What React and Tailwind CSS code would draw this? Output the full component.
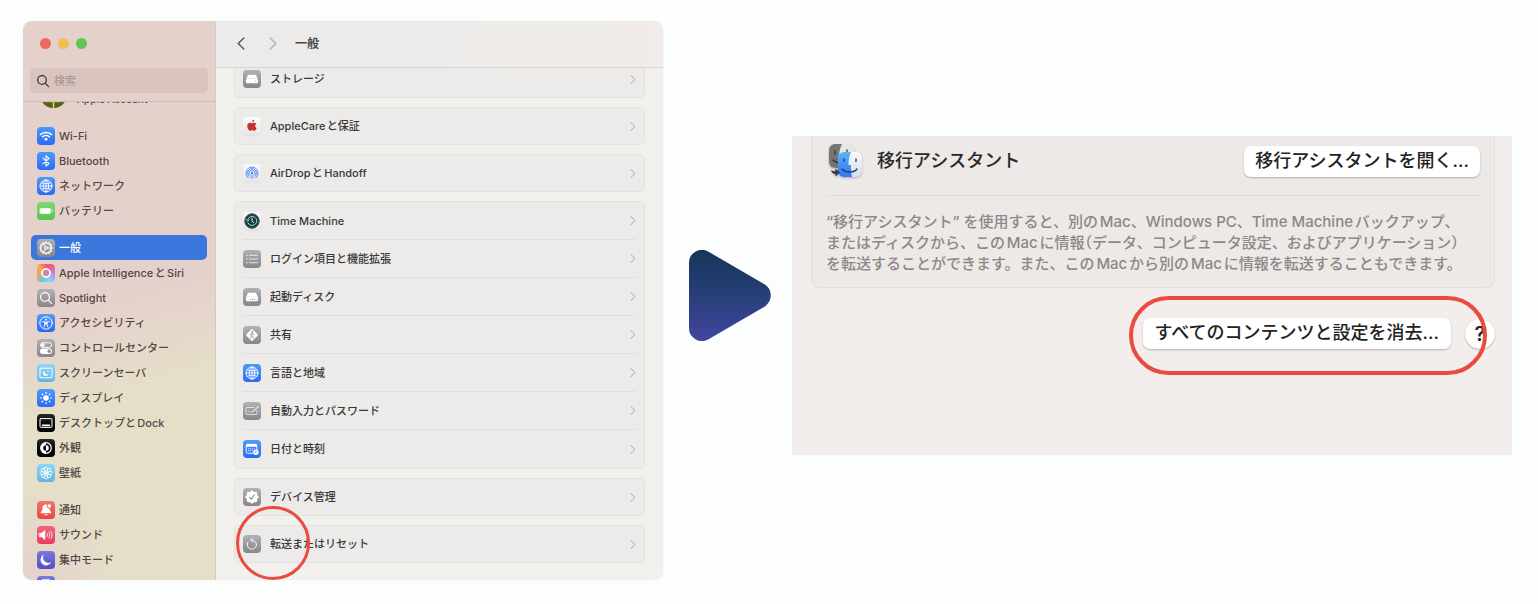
/** Réglages système macOS : « 一般 » puis effacement du contenu, présenté en deux étapes. */

const TILES = {
  blue: 'bg-linear-to-b from-[#4f98f9] to-[#2b6bf3] text-white',
  green: 'bg-linear-to-b from-[#7ddb74] to-[#55c34c] text-white',
  gray: 'bg-linear-to-b from-[#b2b2b5] to-[#86868b] text-white',
  sky: 'bg-linear-to-b from-[#8fd6f5] to-[#63b4e6] text-white',
  black: 'bg-linear-to-b from-[#2a2a2a] to-[#000000] text-white',
  red: 'bg-linear-to-b from-[#f0766c] to-[#e8483b] text-white',
  pink: 'bg-linear-to-b from-[#f2657f] to-[#e83c5c] text-white',
  indigo: 'bg-linear-to-b from-[#7d78de] to-[#524dc6] text-white',
  white: 'bg-linear-to-b from-[#fbfbfb] to-[#e6e6e6] text-[#3b82f6] shadow-xs',
  siri: 'bg-[conic-gradient(from_0deg,#ee5a6c,#ec5f9d,#b690f0,#8fd0f3,#63c8e8,#f0a45a,#f0b04c,#ee5a6c)] text-white',
};

const line = { fill: 'none', stroke: 'currentColor', strokeLinecap: 'round', strokeLinejoin: 'round' };

const SPOKES = [0, 45, 90, 135, 180, 225, 270, 315];
const TEETH = [0, 30, 60, 90, 120, 150, 180, 210, 240, 270, 300, 330];

const GLYPHS = {
  wifi: (
    <g {...line} strokeWidth="1.5" strokeLinecap="butt">
      <path d="M3 7.9a8.6 8.6 0 0 1 12 0" />
      <path d="M5.1 10.2a5.6 5.6 0 0 1 7.8 0" />
      <path d="M7.1 11.9a2.8 2.8 0 0 1 3.8 0L9 13.9z" fill="currentColor" stroke="none" />
    </g>
  ),
  bluetooth: <path {...line} strokeWidth="1.1" d="M6 6.2l6 5.4L9 14.2V3.8l3 2.6-6 5.4" />,
  globe: (
    <g {...line} strokeWidth="0.9">
      <circle cx="9" cy="9" r="6" />
      <ellipse cx="9" cy="9" rx="2.8" ry="6" />
      <path d="M9 3v12M3 9h12M4.2 5.8c2.8 1.4 6.8 1.4 9.6 0M4.2 12.2c2.8-1.4 6.8-1.4 9.6 0" />
    </g>
  ),
  battery: (
    <g fill="currentColor">
      <rect x="2.5" y="6" width="11.8" height="6" rx="1.8" opacity="0.7" />
      <rect x="3.3" y="6.8" width="9.8" height="4.4" rx="1" />
      <path d="M15 7.8c1 .3 1 2.1 0 2.4z" />
    </g>
  ),
  gear: (
    <g {...line} strokeWidth="1">
      <circle cx="9" cy="9" r="5.2" strokeWidth="1.3" />
      <circle cx="9" cy="9" r="1.4" />
      {TEETH.map((a) => (
        <path key={a} d="M9 2.5v1" transform={`rotate(${a} 9 9)`} />
      ))}
      <path d="M10.4 9H14M8.3 7.8l-2-3.2M8.3 10.2l-2 3.2" />
    </g>
  ),
  siri: (
    <g {...line} strokeWidth="0.9">
      {[0, 30, 60].map((a) => (
        <rect key={a} x="5.2" y="5.2" width="7.6" height="7.6" rx="2.6" transform={`rotate(${a} 9 9)`} />
      ))}
      <circle cx="9" cy="9" r="2.9" fill="#c98aa6" stroke="none" />
    </g>
  ),
  search: (
    <g {...line} strokeWidth="1.2">
      <circle cx="8" cy="8" r="4.4" />
      <path d="M11.3 11.3l3.4 3.4" />
    </g>
  ),
  accessibility: (
    <g {...line} strokeWidth="1">
      <circle cx="9" cy="9" r="6.2" />
      <circle cx="9" cy="5.7" r="0.9" fill="currentColor" stroke="none" />
      <path d="M5.8 7.6l2.2.5v2l-1 3M12.2 7.6l-2.2.5v2l1 3M8.5 8.1h1v2h-1z" />
    </g>
  ),
  toggles: (
    <g>
      <rect x="3.4" y="3.8" width="11.2" height="4.6" rx="2.3" {...line} strokeWidth="0.9" />
      <circle cx="5.9" cy="6.1" r="1.8" fill="currentColor" />
      <rect x="3" y="9.5" width="12" height="5.4" rx="2.7" fill="currentColor" />
      <circle cx="12.2" cy="12.2" r="1.7" fill="#8e8e93" />
    </g>
  ),
  screensaver: (
    <g>
      <rect x="3" y="4.2" width="12" height="9.6" rx="0.8" {...line} strokeWidth="1" />
      <path d="M7.8 6.6a2.8 2.8 0 1 0 3.6 3.5 2.6 2.6 0 0 1-3.6-3.5z" fill="currentColor" />
      <circle cx="11" cy="7.3" r="0.7" fill="currentColor" />
      <circle cx="12.6" cy="9" r="0.4" fill="currentColor" />
    </g>
  ),
  sun: (
    <g {...line} strokeWidth="1.2">
      <circle cx="9" cy="9" r="2.8" fill="currentColor" stroke="none" />
      {SPOKES.map((a) => (
        <path key={a} d="M9 3.4v1" transform={`rotate(${a} 9 9)`} />
      ))}
    </g>
  ),
  dock: (
    <g>
      <rect x="3" y="4.6" width="12" height="8.8" rx="1" {...line} strokeWidth="1" />
      <rect x="4.8" y="10.4" width="8.4" height="1.8" rx="0.5" fill="currentColor" />
    </g>
  ),
  contrast: (
    <g>
      <circle cx="9" cy="9" r="5.3" {...line} strokeWidth="1.2" />
      <path d="M9 3.7a5.3 5.3 0 0 0 0 10.6v-2.5a2.8 2.8 0 0 1 0-5.6z" fill="currentColor" />
      <path d="M9 6.2a2.8 2.8 0 0 1 0 5.6z" fill="currentColor" />
    </g>
  ),
  flower: (
    <g {...line} strokeWidth="0.8">
      {SPOKES.map((a) => (
        <ellipse key={a} cx="9" cy="5" rx="1.7" ry="2" transform={`rotate(${a} 9 9)`} />
      ))}
      <circle cx="9" cy="9" r="1.3" fill="currentColor" />
    </g>
  ),
  bell: (
    <g fill="currentColor">
      <path d="M8.8 3.4c-2.3 0-3.3 1.7-3.4 3.6-.1 2.3-.5 3-1.5 4.1-.4.5-.1 1.1.5 1.1h9.2c.6 0 .9-.6.5-1.1-1-1.1-1.4-1.7-1.5-3.5a2.5 2.5 0 0 1-2.4-3.9z" />
      <path d="M7.4 13.2h3.2c-.3 1.6-2.9 1.6-3.2 0z" />
      <circle cx="12.3" cy="5" r="1.8" />
    </g>
  ),
  speaker: (
    <g {...line} strokeWidth="0.8">
      <path d="M2.6 7.3h2l3.2-2.7v8.8l-3.2-2.7h-2z" fill="currentColor" />
      <path d="M10 7.4c.7.9.7 2.3 0 3.2M11.8 6.2c1.3 1.6 1.3 4 0 5.6M13.6 5c1.9 2.4 1.9 5.6 0 8" />
    </g>
  ),
  moon: <path d="M7 3.6A5.6 5.6 0 1 0 14.3 11 5.3 5.3 0 0 1 7 3.6z" fill="currentColor" />,
  hourglass: <path d="M5 3.2h8v1.5c0 2-2.5 3-2.5 4.3s2.5 2.3 2.5 4.3v1.5H5v-1.5c0-2 2.5-3 2.5-4.3S5 6.7 5 4.7z" fill="currentColor" />,
  disk: (
    <g fill="currentColor">
      <path d="M5.6 4.8h6.8c.4 0 .7.2.9.6l1.5 3.4H3.2l1.5-3.4c.2-.4.5-.6.9-.6z" />
      <rect x="2.9" y="9.1" width="12.2" height="4.2" rx="1.3" />
      <path d="M12.3 11.3h1" stroke="#88888d" strokeWidth="1" />
    </g>
  ),
  startupDisk: (
    <g fill="currentColor">
      <path d="M5.6 4.8h6.8c.4 0 .7.2.9.6l1.5 3.4H3.2l1.5-3.4c.2-.4.5-.6.9-.6z" />
      <rect x="2.9" y="8.6" width="12.2" height="4.7" rx="1.3" />
      <path d="M7.3 11.3h1M9.1 11.3h1M10.9 11.3h1M12.7 11.3h.8" stroke="#88888d" strokeWidth="1" />
    </g>
  ),
  apple: (
    <g fill="#c32f33">
      <path d="M9.1 6.2c.7 0 1.3-.6 2.3-.5.9.1 1.5.5 1.9 1.1-1.8 1.2-1.4 3.6.4 4.3-.5 1.4-1.4 2.7-2.5 2.7-.8 0-1.1-.5-2-.5-1 0-1.3.5-2 .5-1.5 0-3.2-3-2.9-5.3.2-1.7 1.3-2.8 2.7-2.8.9 0 1.4.5 2.1.5z" />
      <path d="M9 5.4c-.1-1.3 1-2.5 2.2-2.6.1 1.3-.9 2.5-2.2 2.6z" />
    </g>
  ),
  airdrop: (
    <g {...line} strokeWidth="0.9">
      <path d="M5.3 13.8a6 6 0 1 1 7.4 0" />
      <path d="M6.2 12.4a4.4 4.4 0 1 1 5.6 0" />
      <path d="M7.2 11.2a2.9 2.9 0 1 1 3.6 0" />
      <circle cx="9" cy="9" r="1.2" fill="currentColor" stroke="none" />
      <path d="M9 9.8l2 4.6H7z" fill="currentColor" stroke="none" opacity="0.5" />
    </g>
  ),
  timeMachine: (
    <g {...line} strokeWidth="1">
      <circle cx="9" cy="9" r="7.3" fill="#173d40" stroke="#49605f" />
      <path d="M4.7 7.6a4.6 4.6 0 1 1 .2 3.2" stroke="#a6d6cc" />
      <path d="M3.2 7.8l1.5 1.5 1.4-1.6" stroke="#a6d6cc" />
      <path d="M9 6v3.2l1.8 1.4" stroke="#e4f3ef" />
    </g>
  ),
  list: (
    <g {...line} strokeWidth="0.9" opacity="0.85">
      <path d="M6.4 5.3h8M6.4 9h8M6.4 12.7h8" />
      <path d="M3.8 5.3h.2M3.8 9h.2M3.8 12.7h.2" strokeWidth="1.3" />
    </g>
  ),
  sharing: (
    <g>
      <rect x="4.5" y="4.5" width="9" height="9" rx="1.2" transform="rotate(45 9 9)" fill="currentColor" />
      <circle cx="9.5" cy="5.7" r="0.9" fill="#8a8a8f" />
      <path
        d="M9.2 7.2l-.4 2.5 1.4 1 .4 1.8M8.8 9.9l-1.3 2.5M7.3 9l.5-1.3 1.4-.5 1 1.2 1.2.3"
        fill="none"
        stroke="#8a8a8f"
        strokeWidth="0.7"
        strokeLinecap="round"
      />
    </g>
  ),
  password: (
    <g {...line} strokeWidth="0.8" opacity="0.85">
      <path d="M11 5.5H4c-.6 0-1 .4-1 1v5c0 .6.4 1 1 1h9c.6 0 1-.4 1-1V8.7" />
      <path d="M9.8 9.6l5.6-5" strokeWidth="1.2" />
      <path d="M5.2 9.8h.1M7 9.8h.1M8.7 9.8h.1" strokeWidth="1.2" />
    </g>
  ),
  calendar: (
    <g>
      <rect x="3.2" y="4.3" width="10.6" height="9" rx="1.4" {...line} strokeWidth="0.9" />
      <path d="M3 5.6c0-1 .6-1.7 1.6-1.7h7.8c1 0 1.6.7 1.6 1.7v1.2H3z" fill="currentColor" />
      <path d="M5.2 8.8h6.5M5.2 10.8h5" stroke="currentColor" strokeWidth="1" strokeDasharray="1 1" />
      <circle cx="13" cy="12.2" r="2.7" fill="currentColor" />
      <path d="M13 10.6v1.7h-1.3" fill="none" stroke="#3b7cf4" strokeWidth="0.7" />
    </g>
  ),
  seal: (
    <g>
      <circle cx="9" cy="9" r="5.2" fill="currentColor" />
      {SPOKES.map((a) => (
        <circle key={a} cx="9" cy="4.3" r="1.9" fill="currentColor" transform={`rotate(${a} 9 9)`} />
      ))}
      <path d="M6.8 9.3l1.6 1.9 2.8-4.2" fill="none" stroke="#88888d" strokeWidth="1.1" strokeLinecap="round" />
    </g>
  ),
  reset: (
    <g {...line} strokeWidth="0.9">
      <path d="M8.3 5a4.6 4.6 0 1 1-3.5 2.3" />
      <path d="M9.6 2.9L7.6 5l2 2" />
    </g>
  ),
};

const SIDEBAR = [
  [
    { label: 'Wi-Fi', icon: 'wifi', tile: 'blue' },
    { label: 'Bluetooth', icon: 'bluetooth', tile: 'blue' },
    { label: 'ネットワーク', icon: 'globe', tile: 'blue' },
    { label: 'バッテリー', icon: 'battery', tile: 'green' },
  ],
  [
    { label: '一般', icon: 'gear', tile: 'gray', active: true },
    { label: 'Apple IntelligenceとSiri', icon: 'siri', tile: 'siri' },
    { label: 'Spotlight', icon: 'search', tile: 'gray' },
    { label: 'アクセシビリティ', icon: 'accessibility', tile: 'blue' },
    { label: 'コントロールセンター', icon: 'toggles', tile: 'gray' },
    { label: 'スクリーンセーバ', icon: 'screensaver', tile: 'sky' },
    { label: 'ディスプレイ', icon: 'sun', tile: 'blue' },
    { label: 'デスクトップとDock', icon: 'dock', tile: 'black' },
    { label: '外観', icon: 'contrast', tile: 'black' },
    { label: '壁紙', icon: 'flower', tile: 'sky' },
  ],
  [
    { label: '通知', icon: 'bell', tile: 'red' },
    { label: 'サウンド', icon: 'speaker', tile: 'pink' },
    { label: '集中モード', icon: 'moon', tile: 'indigo' },
    { label: 'スクリーンタイム', icon: 'hourglass', tile: 'indigo', iconOnly: true },
  ],
];

const GENERAL = [
  [{ label: 'ストレージ', icon: 'disk', tile: 'gray' }],
  [{ label: 'AppleCareと保証', icon: 'apple', tile: 'white' }],
  [{ label: 'AirDropとHandoff', icon: 'airdrop', tile: 'white' }],
  [
    { label: 'Time Machine', icon: 'timeMachine', tile: 'white' },
    { label: 'ログイン項目と機能拡張', icon: 'list', tile: 'gray' },
    { label: '起動ディスク', icon: 'startupDisk', tile: 'gray' },
    { label: '共有', icon: 'sharing', tile: 'gray' },
    { label: '言語と地域', icon: 'globe', tile: 'blue' },
    { label: '自動入力とパスワード', icon: 'password', tile: 'gray' },
    { label: '日付と時刻', icon: 'calendar', tile: 'blue' },
  ],
  [{ label: 'デバイス管理', icon: 'seal', tile: 'gray' }],
  [{ label: '転送またはリセット', icon: 'reset', tile: 'gray', marked: true }],
];

function Tile({ icon, tile }) {
  return (
    <span className={`w-[18px] h-[18px] shrink-0 rounded-[4px] overflow-hidden ${TILES[tile]}`}>
      <svg viewBox="0 0 18 18" className="block w-full h-full" aria-hidden="true">{GLYPHS[icon]}</svg>
    </span>
  );
}

function Chevron({ left, className }) {
  return (
    <svg viewBox="0 0 8 14" className={className} aria-hidden="true">
      <path {...line} strokeWidth="1.6" d={left ? 'M7 1L1 7l6 6' : 'M1 1l6 6-6 6'} />
    </svg>
  );
}

function Sidebar() {
  return (
    <aside className="h-0 min-h-full overflow-hidden flex flex-col border-r border-[#d3cac4] bg-[radial-gradient(circle_at_0%_100%,#e5d0cb_0%,#e5d0cb00_16%),linear-gradient(165deg,#e5d1cc_50%,#e5dfc8_66%)]">
      <div className="shrink-0 px-[7px] pb-2 border-b border-[#cdbcb7]">
        <div className="flex gap-[7px] pt-[17px] pl-[10px] pb-[19px]">
          <button type="button" aria-label="閉じる" className="w-[11px] h-[11px] rounded-full bg-[#ec6a5e]" />
          <button type="button" aria-label="しまう" className="w-[11px] h-[11px] rounded-full bg-[#f4bf4f]" />
          <button type="button" aria-label="拡大" className="w-[11px] h-[11px] rounded-full bg-[#61c554]" />
        </div>
        <label className="flex items-center gap-1 h-[25px] pl-[6px] rounded-[5px] bg-[#d9c4bf] text-[#3d3433]">
          <svg viewBox="0 0 14 14" className="w-[14px] h-[14px] shrink-0" aria-hidden="true">
            <g {...line} strokeWidth="1.3">
              <circle cx="6" cy="6" r="4.3" />
              <path d="M9.2 9.2l3.4 3.4" />
            </g>
          </svg>
          <input
            type="search"
            aria-label="検索"
            placeholder="検索"
            className="w-full min-w-0 bg-transparent outline-none placeholder:text-[#a5928e]"
          />
        </label>
      </div>

      <nav className="flex-1 min-h-0 overflow-hidden px-2 font-medium text-[#504846]">
        <a href="#account" className="flex items-end gap-[10px] h-[27px] -mt-[21px] mb-[15px] pl-[9px]">
          <svg viewBox="0 0 27 27" className="w-[27px] h-[27px]" aria-hidden="true">
            <circle cx="13.5" cy="13.5" r="13.5" fill="#6d7a26" />
            <path d="M2 20c6 3 17 3 23 0l-3 4c-5 4-12 4-17 0z" fill="#56621f" />
            <path d="M13.5 20v7" stroke="#d5ea2c" strokeWidth="1.4" />
          </svg>
          <span className="text-[10px] leading-[12px] pb-[3px]">Apple Account</span>
        </a>
        {SIDEBAR.map((group, i) => (
          <ul key={i} className="mb-3">
            {group.map((item) => (
              <li key={item.label}>
                <a
                  href="#"
                  aria-label={item.label}
                  aria-current={item.active ? 'page' : undefined}
                  className={`flex items-center gap-1 h-[25px] pl-[6px] rounded-[5px] whitespace-nowrap ${
                    item.active ? 'bg-[#3a76dc] text-white' : ''
                  }`}
                >
                  <Tile icon={item.icon} tile={item.tile} />
                  {!item.iconOnly && item.label}
                </a>
              </li>
            ))}
          </ul>
        ))}
      </nav>
    </aside>
  );
}

function GeneralPane() {
  return (
    <section className="min-w-0 flex flex-col bg-[#f1f0ed]">
      <header className="shrink-0 h-[47px] flex items-center pl-[21px] pb-px border-b border-[#d8d6d4] bg-linear-to-r from-[#edebe9] via-[#edebe9] to-[#f1ece9]">
        <button type="button" aria-label="戻る" className="text-[#5c5a59]">
          <Chevron left className="w-2 h-[13px]" />
        </button>
        <button type="button" aria-label="進む" className="ml-6 text-[#b4b1af]">
          <Chevron className="w-2 h-[13px]" />
        </button>
        <h1 className="ml-[18px] text-[12px] font-bold text-[#4a4948]">一般</h1>
      </header>
      <div className="overflow-hidden px-[18px] pb-[17px] font-medium text-[#3a3939]">
        <div className="-mt-2 flex flex-col gap-[9px]">
          {GENERAL.map((rows, i) => (
            <ul
              key={i}
              className={`grid auto-rows-fr px-2 rounded-[5px] bg-[#ecebe9] border border-[#e4e2e0] ${
                rows.length > 1 ? 'min-h-[268px]' : 'min-h-[38px]'
              }`}
            >
              {rows.map((row) => (
                <li key={row.label} className="relative flex border-b border-[#e0dfdd] last:border-b-0">
                  <a href="#" className="flex-1 flex items-center gap-[9px]">
                    <Tile icon={row.icon} tile={row.tile} />
                    <span className="flex-1">{row.label}</span>
                    <Chevron className="w-[6px] h-[9px] text-[#b8b6b5]" />
                  </a>
                  {row.marked && (
                    <span className="absolute -left-[7px] -top-5 w-[74px] h-[74px] rounded-full border-[3px] border-[#ea4b40] pointer-events-none" />
                  )}
                </li>
              ))}
            </ul>
          ))}
        </div>
      </div>
    </section>
  );
}

function NextArrow() {
  return (
    <svg viewBox="0 0 82 91" className="w-[82px] h-[91px] ml-[5px] mb-[10px] justify-self-center" aria-hidden="true">
      <defs>
        <linearGradient id="arrow" x1="0" y1="0" x2="0" y2="1">
          <stop offset="0" stopColor="#17355b" />
          <stop offset="0.3" stopColor="#1f3b6b" />
          <stop offset="1" stopColor="#41469f" />
        </linearGradient>
      </defs>
      <path fill="url(#arrow)" d="M0 13A13 13 0 0 1 20 2L75 34C84 39 84 51 75 57L20 89A13 13 0 0 1 0 78Z" />
    </svg>
  );
}

function MigrationIcon() {
  return (
    <svg viewBox="0 0 34 34" className="w-[34px] h-[34px] shrink-0 drop-shadow-[0_1px_1px_#00000040]" aria-hidden="true">
      <defs>
        <linearGradient id="finderBlue" x1="0" y1="0" x2="0" y2="1">
          <stop offset="0" stopColor="#5cb6f8" />
          <stop offset="1" stopColor="#2f74f0" />
        </linearGradient>
        <linearGradient id="finderWhite" x1="0" y1="0" x2="0" y2="1">
          <stop offset="0" stopColor="#fafbfd" />
          <stop offset="1" stopColor="#d5dbe8" />
        </linearGradient>
        <clipPath id="backFace"><rect x="0" y="0" width="25" height="24" rx="6" /></clipPath>
        <clipPath id="frontFace"><rect x="9" y="8" width="24" height="25" rx="6" /></clipPath>
      </defs>
      <g clipPath="url(#backFace)">
        <path d="M0 0h26v26H0z" fill="#e6e6e6" />
        <path d="M0 0h13c-2 4-3 8-3 13h3v13H0z" fill="#757575" />
        <path d="M6 7v3M18 6v3" stroke="#333" strokeWidth="1.3" strokeLinecap="round" />
        <path d="M4 16c2 2 4 3 8 3" stroke="#333" strokeWidth="1.3" fill="none" strokeLinecap="round" />
      </g>
      <g clipPath="url(#frontFace)">
        <path d="M8 7h26v27H8z" fill="url(#finderWhite)" />
        <path d="M8 7h14.5c-2 4-3 9-3 14H22c0 5 .2 9 1 13H8z" fill="url(#finderBlue)" />
        <path d="M15 15v2.5M27 15v2.5" stroke="#24405f" strokeWidth="1.3" strokeLinecap="round" />
        <path d="M13 25c4 4 12 4 15 0" stroke="#24405f" strokeWidth="1.3" fill="none" strokeLinecap="round" />
      </g>
      <path d="M2 26c1 1 3 1.4 4.500 1v-2.5l4.500 4-4.500 4v-2.600C4 30 2.500 28.500 2 26z" fill="#2f4058" />
    </svg>
  );
}

const pushButton = 'rounded-[7px] bg-white text-[18px] leading-[21px] font-medium text-[#232222] whitespace-nowrap shadow-[0_1px_2px_#00000040]';

function TransferPane() {
  return (
    <section className="min-w-0 mb-[10px] pl-[19px] pr-[17px] pb-[106px] bg-[#f3edeb]">
      <div className="px-[14px] pb-[12px] rounded-b-[8px] border border-t-0 border-[#e4dfdd] bg-[#ede9e7]">
        <div className="flex items-center pt-2 pb-[17px] pl-[3px] border-b border-[#e0dcda]">
          <MigrationIcon />
          <h2 className="flex-1 ml-[14px] text-[18px] leading-[24px] font-medium text-[#2a2929]">移行アシスタント</h2>
          <button type="button" className={`${pushButton} px-[11px] pt-1 pb-[6px]`}>移行アシスタントを開く...</button>
        </div>
        <p className="pt-[15px] pb-px text-[15px] leading-[21px] font-medium text-[#8c8887]">
          “移行アシスタント” を使用すると、別のMac、Windows PC、Time Machineバックアップ、
          <br />
          またはディスクから、このMacに情報<span className="[font-feature-settings:'halt']">（</span>データ、コンピュータ設定、およびアプリケーション<span className="[font-feature-settings:'halt']">）</span>
          <br />
          を転送することができます。また、このMacから別のMacに情報を転送することもできます。
        </p>
      </div>
      <div className="flex justify-end items-center gap-[14px] mt-[30px]">
        <div className="relative">
          <button type="button" className={`${pushButton} px-3 pt-1 pb-[6px]`}>すべてのコンテンツと設定を消去...</button>
          <span className="absolute z-10 -left-[14px] -right-9 -top-[22px] -bottom-[26px] rounded-full border-4 border-[#ea4b40] pointer-events-none" />
        </div>
        <button
          type="button"
          aria-label="ヘルプ"
          className="w-[30px] h-[30px] rounded-full bg-white text-[20px] leading-[30px] font-semibold text-[#232222] shadow-[0_1px_2px_#00000040]"
        >
          ?
        </button>
      </div>
    </section>
  );
}

export default function App() {
  return (
    <main
      lang="ja"
      className="min-h-screen pt-[21px] pl-[23px] pr-[26px] pb-6 bg-[#fcfefd] grid grid-cols-[640fr_129fr_720fr] items-center content-start font-['Inter','Noto_Sans_CJK_JP',sans-serif] text-[11px] leading-[16px] [text-autospace:normal]"
    >
      <div className="grid grid-cols-[193px_1fr] rounded-[9px] overflow-hidden shadow-[0_0_1px_#00000033]">
        <Sidebar />
        <GeneralPane />
      </div>
      <NextArrow />
      <TransferPane />
    </main>
  );
}
